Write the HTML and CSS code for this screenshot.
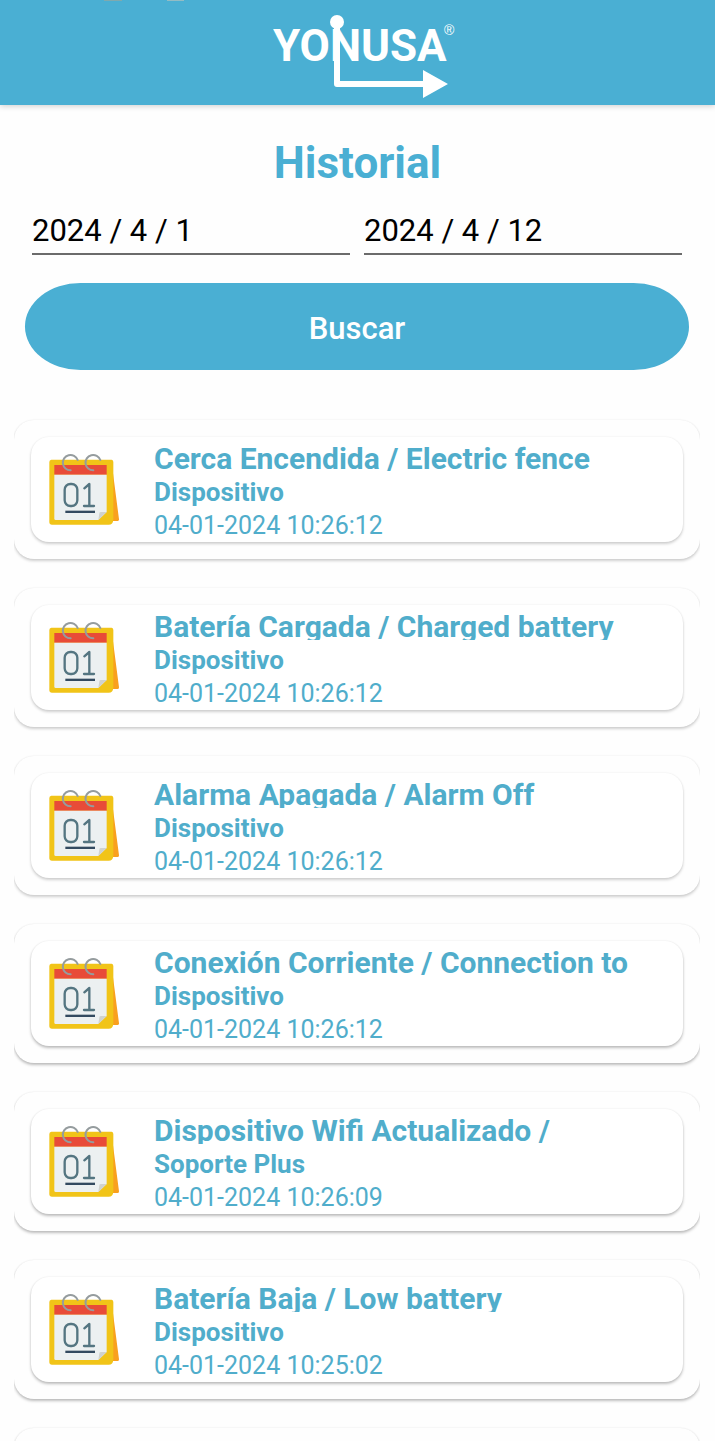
FILE: index.html
```html
<!DOCTYPE html>
<html lang="es">
<head>
<meta charset="utf-8">
<meta name="viewport" content="width=device-width, initial-scale=1">
<title>Historial</title>
<link rel="stylesheet" href="styles.css">
</head>
<body>
<svg class="defs" aria-hidden="true">
  <symbol id="calendar" viewBox="54 39 216 216">
    <path d="M238 66L247 84L267 238Q268 243 263 243H236Z" fill="#f9a01e"/>
    <path d="M64 59H245Q250 60 250 66V239Q249 254 236 254H66Q58 254 58 246V66Q58 60 64 59Z" fill="#f1c418"/>
    <path d="M73 75H230V104H73Z" fill="#e84b38"/>
    <path d="M73 104H230V216L205 240H77Q73 240 73 236Z" fill="#ecf0f1"/>
    <path d="M205 240L208 220Q208 216 213 216H230Z" fill="#d0d2cf"/>
    <g fill="none" stroke="#959c9e" stroke-width="6" stroke-linecap="round">
      <path d="M143 60A23 23 0 1 0 122 91"/>
      <path d="M211 60A23 23 0 1 0 190 91"/>
    </g>
    <g fill="none" stroke="#547581" stroke-width="7" stroke-linecap="round" stroke-linejoin="round">
      <rect x="104" y="132" width="38" height="66" rx="17"/>
      <path d="M163 145L178 132V198M162 198H192"/>
    </g>
    <path d="M106 212H195V219H106Z" fill="#334a60"/>
  </symbol>
</svg>
<div class="app">
  <header class="topbar">
    <svg class="logo" viewBox="0 0 184 86" role="img" aria-label="Yonusa">
      <text class="logo-text" x="0" y="48">YONUSA</text>
      <text class="logo-mark" x="171" y="22">®</text>
      <circle cx="64" cy="9" r="7"/>
      <path d="M61 9H67V68H150V57L175 71L150 85V74H64Q61 74 61 71Z"/>
    </svg>
  </header>
  <main class="content">
    <h1 class="title">Historial</h1>
    <form class="search">
      <div class="dates">
        <input class="date" type="text" aria-label="Fecha inicial" value="2024 / 4 / 1">
        <input class="date" type="text" aria-label="Fecha final" value="2024 / 4 / 12">
      </div>
      <button class="submit" type="button">Buscar</button>
    </form>
    <ul class="events">
      <li class="card"><article class="event"><svg class="icon" aria-hidden="true"><use href="#calendar"/></svg><div class="info"><h2 class="name">Cerca Encendida / Electric fence</h2><p class="source">Dispositivo</p><time class="time">04-01-2024 10:26:12</time></div></article></li>
      <li class="card"><article class="event"><svg class="icon" aria-hidden="true"><use href="#calendar"/></svg><div class="info"><h2 class="name">Batería Cargada / Charged battery</h2><p class="source">Dispositivo</p><time class="time">04-01-2024 10:26:12</time></div></article></li>
      <li class="card"><article class="event"><svg class="icon" aria-hidden="true"><use href="#calendar"/></svg><div class="info"><h2 class="name">Alarma Apagada / Alarm Off</h2><p class="source">Dispositivo</p><time class="time">04-01-2024 10:26:12</time></div></article></li>
      <li class="card"><article class="event"><svg class="icon" aria-hidden="true"><use href="#calendar"/></svg><div class="info"><h2 class="name">Conexión Corriente / Connection to</h2><p class="source">Dispositivo</p><time class="time">04-01-2024 10:26:12</time></div></article></li>
      <li class="card"><article class="event"><svg class="icon" aria-hidden="true"><use href="#calendar"/></svg><div class="info"><h2 class="name">Dispositivo Wifi Actualizado /</h2><p class="source">Soporte Plus</p><time class="time">04-01-2024 10:26:09</time></div></article></li>
      <li class="card"><article class="event"><svg class="icon" aria-hidden="true"><use href="#calendar"/></svg><div class="info"><h2 class="name">Batería Baja / Low battery</h2><p class="source">Dispositivo</p><time class="time">04-01-2024 10:25:02</time></div></article></li>
      <li class="card"></li>
    </ul>
  </main>
</div>
</body>
</html>
```
FILE: styles.css
```css
:root {
  --blue: #4aafd3;
  --text-blue: #50adcb;
}

* {
  box-sizing: border-box;
}

body {
  margin: 0;
  background: #fefefe;
  font-family: Roboto, "Liberation Sans", sans-serif;
}

.defs {
  display: none;
}

.app {
  display: flex;
  flex-direction: column;
  height: 100vh;
  overflow: hidden;
}

.topbar {
  position: relative;
  display: flex;
  flex: none;
  justify-content: center;
  padding: 13px 0 6px 14px;
  background: var(--blue);
  box-shadow: 0 1px 6px rgba(0, 0, 0, 0.2);
}

/* Lower edge of the status bar indicators */
.topbar::before {
  content: "";
  position: absolute;
  top: 0;
  left: 104px;
  width: 80px;
  height: 1px;
  background: linear-gradient(90deg, #7fa9ae 18px, transparent 18px 63px, #93bcc4 63px);
}

.logo {
  display: block;
  width: 184px;
  height: 86px;
  fill: #fff;
}

.logo-text {
  font: bold 44px Roboto, "Liberation Sans", sans-serif;
}

.logo-mark {
  font: 14px "Liberation Sans", sans-serif;
}

.content {
  display: flex;
  flex: 1;
  flex-direction: column;
  min-height: 0;
}

.title {
  margin: 32px 0 0;
  color: var(--blue);
  font-size: 44px;
  font-weight: 700;
  line-height: 52px;
  text-align: center;
}

.search {
  display: flex;
  flex-direction: column;
  gap: 28px;
  padding: 16px 26px 0 25px;
}

.dates {
  display: flex;
  gap: 14px;
  padding: 0 7px;
}

.date {
  flex: 1;
  min-width: 0;
  height: 50px;
  padding: 2px 0 0;
  border: 0;
  border-bottom: 2px solid #6b6b6b;
  border-radius: 0;
  background: transparent;
  color: #000;
  font: 31px Roboto, sans-serif;
}

.submit {
  height: 87px;
  padding: 4px 0 0;
  border: 0;
  border-radius: 56px / 44px;
  background: var(--blue);
  color: #fff;
  font: 500 31px Roboto, sans-serif;
}

.events {
  display: flex;
  flex: 1;
  flex-direction: column;
  gap: 29px;
  min-height: 0;
  margin: 40px 15px 0 14px;
  padding: 10px 0 0;
  overflow: hidden;
  list-style: none;
}

.card {
  --shade: rgba(0, 0, 0, 0.18);
  flex: none;
  min-height: 139px;
  padding: 17px;
  border-radius: 20px;
  background: #fefefe;
  box-shadow: 0 2px 3px var(--shade), 0 0 2px rgba(0, 0, 0, 0.08);
}

.card:nth-child(n + 4) {
  --shade: rgba(0, 0, 0, 0.25);
}

.event {
  display: flex;
  gap: 34px;
  padding: 4px 17px 1px;
  border-radius: 18px;
  background: #fff;
  box-shadow: 0 2px 3px var(--shade), 0 0 2px rgba(0, 0, 0, 0.08);
}

.icon {
  flex: none;
  width: 72px;
  height: 72px;
  margin-top: 12px;
}

.info {
  flex: 1;
  min-width: 0;
  color: var(--text-blue);
}

.name {
  height: 31px;
  margin: 0;
  overflow: hidden;
  font-size: 30px;
  font-weight: 700;
  line-height: 35px;
  white-space: nowrap;
}

.source {
  margin: 5px 0 4px;
  font-size: 26px;
  font-weight: 700;
  line-height: 30px;
}

.time {
  display: block;
  font-size: 25px;
  line-height: 30px;
}
```
